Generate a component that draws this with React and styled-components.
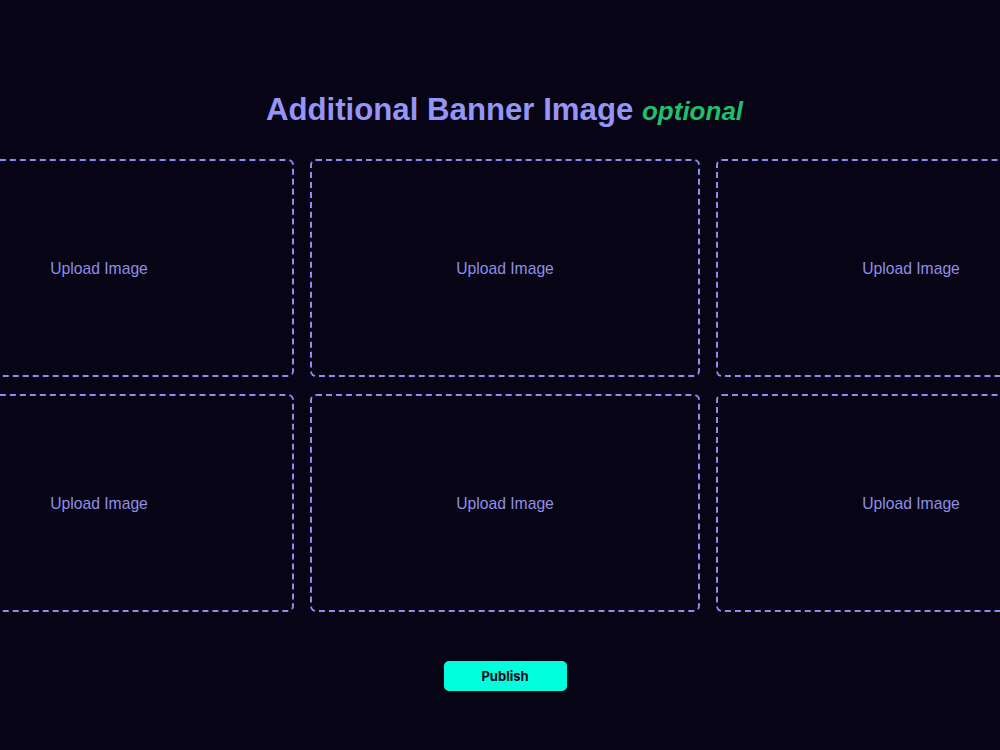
import React from "react";
import styled, { createGlobalStyle } from "styled-components";

const Global = createGlobalStyle`
  html, body { margin: 0; padding: 0; background: #060415; overflow: hidden; }
  body { font-family: "Liberation Sans", Arial, sans-serif; }
`;

const Page = styled.div`
  width: 1000px;
  height: 750px;
  display: flex;
  flex-direction: column;
  align-items: center;
  padding-top: 90px;
  box-sizing: border-box;
`;

const Title = styled.h1`
  margin: 0;
  font-size: 31.2px;
  font-weight: 700;
  color: #9595f7;
  line-height: 40px;
  padding-left: 9px;
`;

const Optional = styled.span`
  font-style: italic;
  font-size: 26px;
  color: #1fbf6b;
`;

const GridWrap = styled.div`
  width: 1000px;
  display: flex;
  justify-content: center;
  padding-left: 10px;
  box-sizing: border-box;
  margin-top: 28px;
`;

const Grid = styled.div`
  flex-shrink: 0;
  display: grid;
  grid-template-columns: repeat(3, 390px);
  grid-auto-rows: 218px;
  column-gap: 16px;
  row-gap: 17px;
`;

const Slot = styled.div`
  box-sizing: border-box;
  border: 2px dashed #8d8df0;
  border-radius: 6px;
  display: flex;
  align-items: center;
  justify-content: center;
  color: #8f8fe6;
  font-size: 15.7px;
  padding-top: 1px;
`;

const Publish = styled.button`
  margin-top: 49px;
  margin-left: 10px;
  width: 123px;
  height: 30px;
  border: none;
  border-radius: 5px;
  background: #00ffdd;
  color: #0a0a1a;
  font-family: Inter, "Liberation Sans", sans-serif;
  font-weight: 700;
  font-size: 13px;
  cursor: pointer;
`;

export default function App() {
  return (
    <>
      <Global />
      <Page>
        <Title>
          Additional Banner Image <Optional>optional</Optional>
        </Title>
        <GridWrap>
          <Grid>
            {Array.from({ length: 6 }).map((_, i) => (
              <Slot key={i}>Upload Image</Slot>
            ))}
          </Grid>
        </GridWrap>
        <Publish>Publish</Publish>
      </Page>
    </>
  );
}
